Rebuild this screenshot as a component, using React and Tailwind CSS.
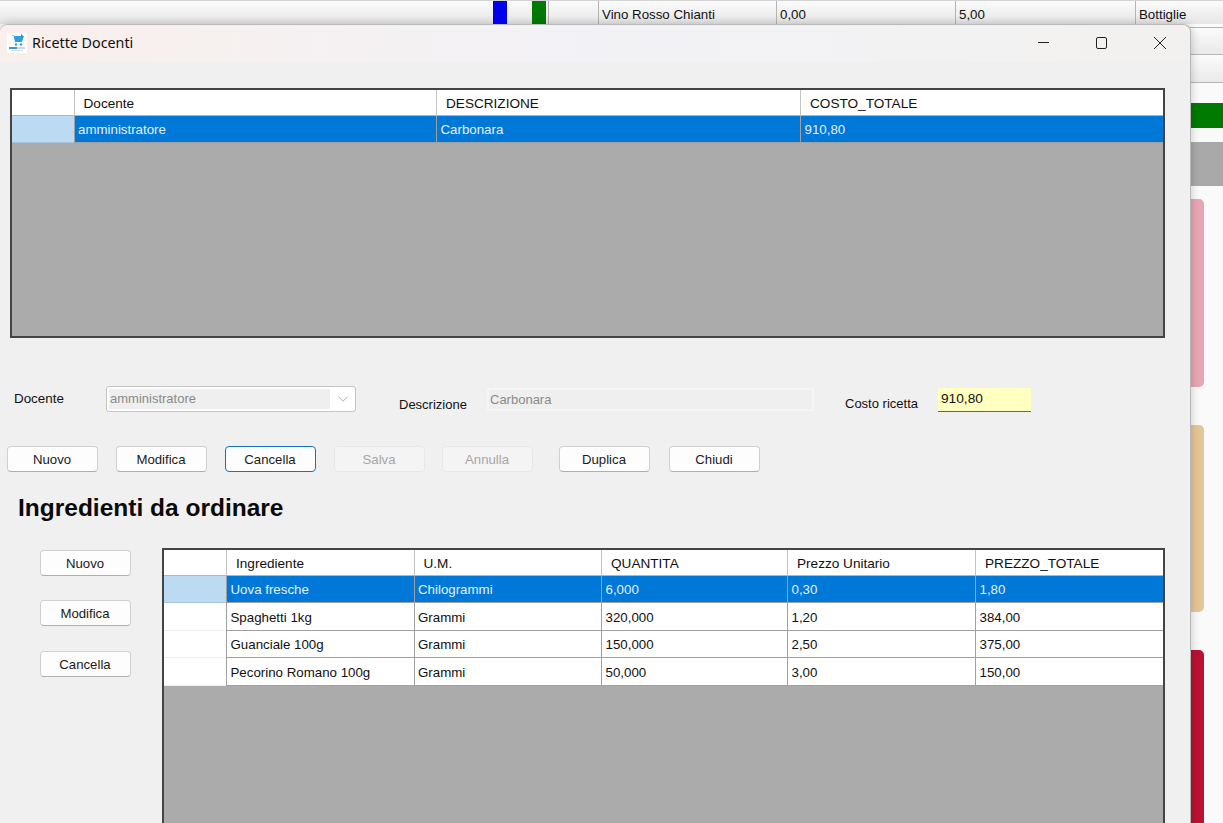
import { ChevronDown } from "lucide-react";

const font = "font-['Liberation_Sans',Arial,sans-serif]";

const recipeRows = [["amministratore", "Carbonara", "910,80"]];

const ingredients = [
  ["Uova fresche", "Chilogrammi", "6,000", "0,30", "1,80"],
  ["Spaghetti 1kg", "Grammi", "320,000", "1,20", "384,00"],
  ["Guanciale 100g", "Grammi", "150,000", "2,50", "375,00"],
  ["Pecorino Romano 100g", "Grammi", "50,000", "3,00", "150,00"],
];

const recipeCols = "grid-cols-[61.5px_362.5px_364px_1fr]";
const ingredientCols = "grid-cols-[62px_187.5px_187.5px_186px_188px_1fr]";

function WinButton({ children, focused, disabled, className = "" }) {
  return (
    <button
      className={`h-[26px] w-[91px] rounded-[4px] border pr-[1px] pt-[1px] text-[13.2px] leading-none ${
        focused
          ? "border-[1.5px] border-[#0f74c8] bg-[#fdfdfd] text-[#1a1a1a]"
          : disabled
            ? "border-[#e8e8e8] bg-[#f4f4f4] text-[#a6a6a6]"
            : "border-[#d0d0d0] border-b-[#aeaeae] bg-[#fdfdfd] text-[#1a1a1a]"
      } ${className}`}
    >
      {children}
    </button>
  );
}

function HeaderRow({ cols, labels }) {
  return (
    <div className={`grid ${cols} h-[25.5px] border-b border-[#b5b5b5] bg-white`}>
      <div />
      {labels.map((label) => (
        <div key={label} className="flex items-center border-l border-[#c4c4c4] pl-[9px] pt-[3px] text-[13.6px] text-[#111]">
          {label}
        </div>
      ))}
    </div>
  );
}

function DataRow({ cols, values, selected }) {
  return (
    <div className={`grid ${cols} h-[27.5px]`}>
      <div className={selected ? "border-b border-[#a9c4da] bg-[#bcdbf3]" : "border-b border-[#eeeeee] bg-white"} />
      {values.map((value, i) => (
        <div
          key={i}
          className={`flex items-center border-b border-l border-[#a0a0a0] pl-[3.5px] pt-[3px] text-[13.3px] ${
            selected ? "bg-[#0078d7] text-[#e4f0fb]" : "bg-white text-[#111]"
          }`}
        >
          {value}
        </div>
      ))}
    </div>
  );
}

function AppIcon() {
  return (
    <div className="flex h-5 w-5 flex-col items-center bg-white pt-[1px]">
      <svg width="15" height="12" viewBox="0 0 15 12">
        <path d="M1 1h2.500l1.500 7h7l2-6H4z" fill="#2f9fdc" />
        <path d="M11 0l2 1.500-2 1z" fill="#1b7fc0" />
        <circle cx="6" cy="10.500" r="1.200" fill="#2f9fdc" />
        <circle cx="11" cy="10.500" r="1.200" fill="#2f9fdc" />
      </svg>
      <div className="mt-[1px] flex h-[2px] w-4">
        <div className="w-2 bg-[#3a9ad9]" />
        <div className="w-2 bg-[#c9d6df]" />
      </div>
      <div className="mt-[1px] h-px w-3 bg-[#d5dde3]" />
    </div>
  );
}

export default function App() {
  return (
    <div className={`relative h-[823px] w-[1223px] overflow-hidden bg-[#fafafa] ${font}`}>
      {/* application behind the dialog */}
      <div className="flex h-[24px] border-t border-[#d4d4d4] bg-gradient-to-b from-[#fbfbfb] to-[#e6e6e6]">
        <div className="ml-[493px] w-[14px] bg-[#0000f0]" />
        <div className="ml-[25px] w-[14px] bg-[#007a00]" />
        <div className="ml-[2px] grid flex-1 grid-cols-[50px_178px_179px_180px_1fr] text-[13.3px] text-[#111]">
          <div className="border-l border-[#b5b5b5]" />
          <div className="border-l border-[#b5b5b5] pl-[3px] pt-[4px]">Vino Rosso Chianti</div>
          <div className="border-l border-[#b5b5b5] pl-[3px] pt-[4px]">0,00</div>
          <div className="border-l border-[#b5b5b5] pl-[3px] pt-[4px]">5,00</div>
          <div className="border-l border-[#b5b5b5] pl-[3px] pt-[4px]">Bottiglie</div>
        </div>
      </div>
      <div className="ml-[1190px] flex flex-col">
        <div className="h-[4px] border-b border-[#b5b5b5]" />
        <div className="h-[27px] border-b border-[#b5b5b5] bg-gradient-to-b from-[#fbfbfb] to-[#e9e9e9]" />
        <div className="h-[28px] border-b border-[#b5b5b5] bg-gradient-to-b from-[#fbfbfb] to-[#e9e9e9]" />
        <div className="h-[20px]" />
        <div className="h-[25px] bg-[#007a00]" />
        <div className="mt-[14px] h-[44px] bg-[#a9a9a9]" />
        <div className="mt-[13px] h-[188px] w-[14px] rounded-r-[5px] bg-[#e8a6b2]" />
        <div className="mt-[38px] h-[187px] w-[14px] rounded-r-[5px] bg-[#e6c698]" />
        <div className="mt-[38px] h-[180px] w-[14px] rounded-tr-[5px] bg-[#bb1133]" />
      </div>

      {/* dialog window */}
      <div className="absolute left-0 top-[24px] flex h-[810px] w-[1191px] flex-col rounded-t-[8px] border-r border-t border-[#b8b8b8] bg-[#f0f0f0] shadow-[0_0_10px_rgba(0,0,0,0.22)]">
        <div className="flex h-[37px] shrink-0 items-center rounded-t-[8px] bg-gradient-to-r from-[#f9efec] via-[#f2f2f6] to-[#f3f1ef] pb-[2px] pl-[7px]">
          <AppIcon />
          <span className="ml-[5px] font-['Noto_Sans',sans-serif] text-[14.3px] text-[#111]">Ricette Docenti</span>
          <div className="ml-auto flex items-center">
            <div className="flex w-[58px] justify-center">
              <div className="h-px w-[11px] bg-[#222]" />
            </div>
            <div className="flex w-[58px] justify-center">
              <div className="h-[12px] w-[11px] rounded-[2px] border border-[#222]" />
            </div>
            <div className="flex w-[60px] justify-center">
              <svg width="14" height="14" viewBox="0 0 14 14" stroke="#222" strokeWidth="1">
                <path d="M1 1l12 12M13 1L1 13" />
              </svg>
            </div>
          </div>
        </div>

        {/* recipes grid */}
        <div className="mx-[10px] mt-[26px] flex h-[250px] w-[1155px] shrink-0 flex-col border-2 border-[#444] bg-[#ababab]">
          <HeaderRow cols={recipeCols} labels={["Docente", "DESCRIZIONE", "COSTO_TOTALE"]} />
          {recipeRows.map((row) => (
            <DataRow key={row[0]} cols={recipeCols} values={row} selected />
          ))}
        </div>

        {/* form */}
        <div className="mt-[48px] flex h-[26px] shrink-0 items-start text-[13px] text-[#111]">
          <span className="ml-[14px] w-[92px] pt-[3px] text-[13.4px]">Docente</span>
          <div className="flex h-[26px] w-[250px] items-center rounded-[3px] border border-[#c4c4c4] bg-white p-[2px]">
            <div className="flex h-full flex-1 items-center bg-[#efefef] pl-[1px] text-[#8a8a8a]">amministratore</div>
            <ChevronDown size={18} strokeWidth={0.9} className="ml-[4px] mr-[1px] text-[#8a8a8a]" />
          </div>
          <span className="ml-[43px] w-[88px] pt-[9px]">Descrizione</span>
          <div className="mt-[2px] flex h-[23px] w-[327px] items-center border-2 border-[#f5f5f5] bg-[#efefef] pl-[1px] text-[#8a8a8a]">
            Carbonara
          </div>
          <span className="ml-[31px] w-[93px] pt-[8px]">Costo ricetta</span>
          <div className="mt-[2px] flex h-[24px] w-[93px] items-center border-b border-[#666] bg-[#ffffc0] pl-[3px] text-[13.7px]">
            910,80
          </div>
        </div>

        {/* toolbar */}
        <div className="mt-[34px] flex shrink-0 pl-[7px]">
          <WinButton>Nuovo</WinButton>
          <WinButton className="ml-[18px]">Modifica</WinButton>
          <WinButton focused className="ml-[18px]">Cancella</WinButton>
          <WinButton disabled className="ml-[18px]">Salva</WinButton>
          <WinButton disabled className="ml-[17px]">Annulla</WinButton>
          <WinButton className="ml-[26px]">Duplica</WinButton>
          <WinButton className="ml-[19px]">Chiudi</WinButton>
        </div>

        <h2 className="ml-[18px] mt-[20px] h-[32px] shrink-0 text-[24.5px] font-bold leading-[32px] text-[#0a0a0a]">
          Ingredienti da ordinare
        </h2>

        <div className="mt-[24px] flex min-h-0 flex-1">
          <div className="ml-[40px] flex w-[91px] flex-col pt-[2px]">
            <WinButton>Nuovo</WinButton>
            <WinButton className="mt-[24px]">Modifica</WinButton>
            <WinButton className="mt-[25px]">Cancella</WinButton>
          </div>
          <div className="ml-[31px] flex w-[1003px] flex-col border-2 border-[#444] bg-[#ababab]">
            <HeaderRow cols={ingredientCols} labels={["Ingrediente", "U.M.", "QUANTITA", "Prezzo Unitario", "PREZZO_TOTALE"]} />
            {ingredients.map((row, i) => (
              <DataRow key={row[0]} cols={ingredientCols} values={row} selected={i === 0} />
            ))}
          </div>
        </div>
      </div>
    </div>
  );
}
